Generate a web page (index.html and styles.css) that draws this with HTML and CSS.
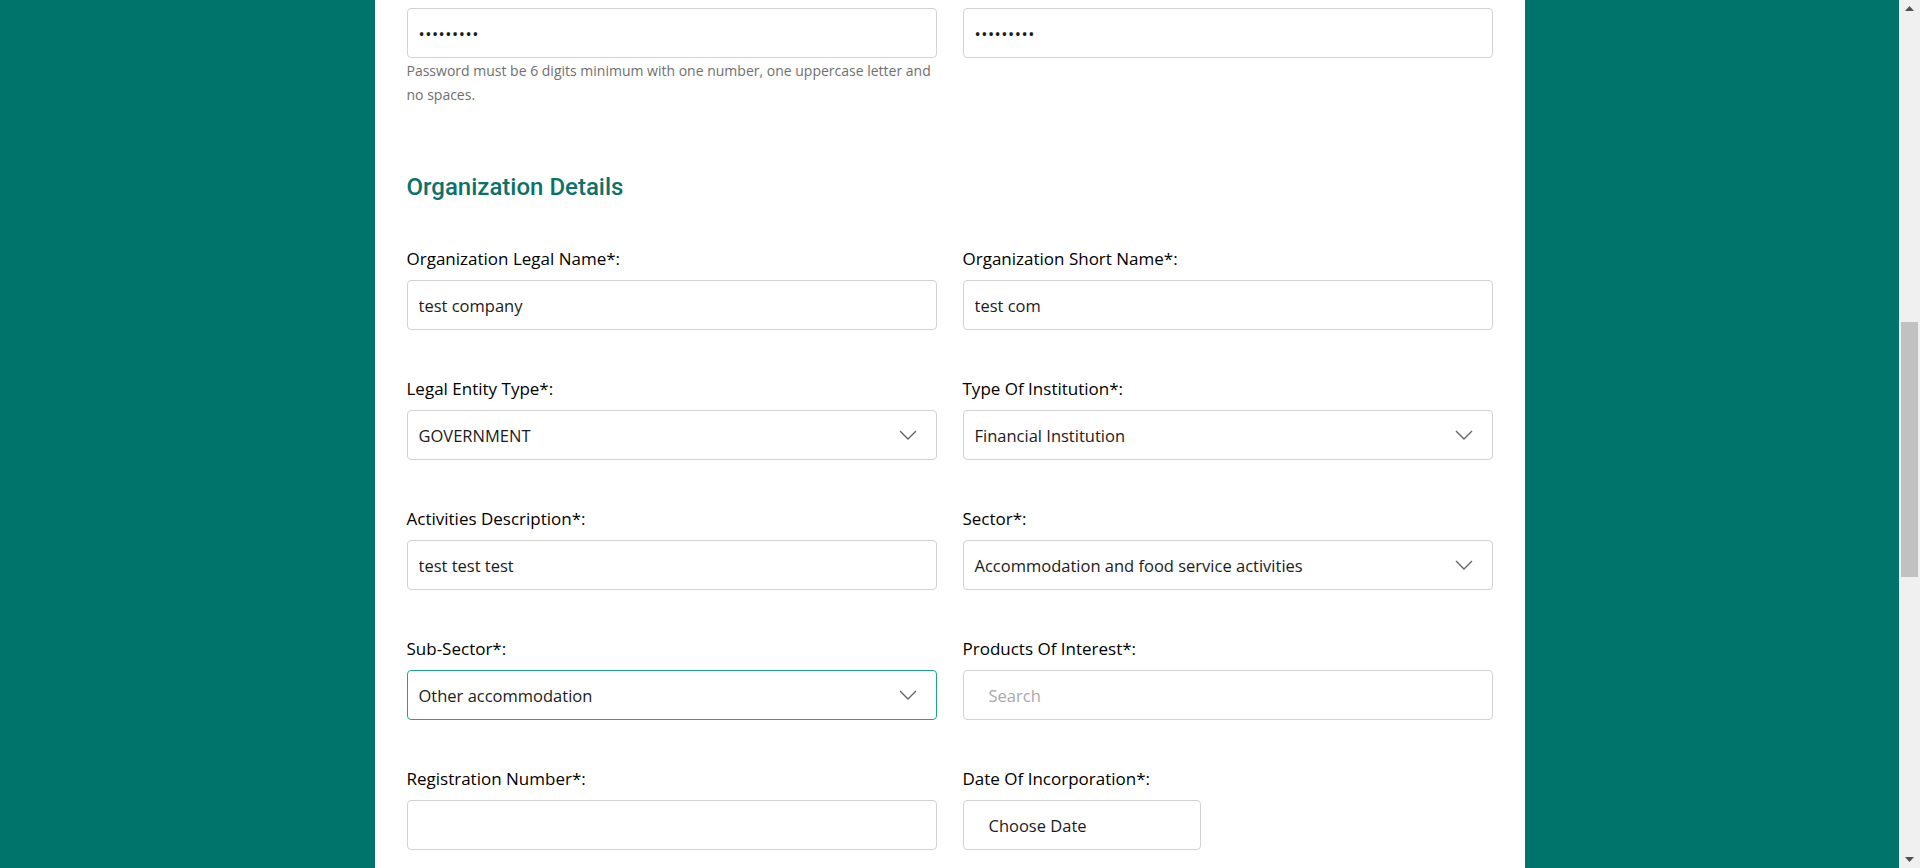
FILE: index.html
```html
<!DOCTYPE html>
<html lang="en">
<head>
<meta charset="utf-8">
<title>Registration</title>
<link rel="stylesheet" href="styles.css">
</head>
<body>
<div class="page">
  <div class="viewport">
    <main class="panel">
      <div class="form-grid">
        <div class="field field--pw">
          <input class="control control--pw" type="password" value="aaaaaaaaa">
          <p class="help">Password must be 6 digits minimum with one number, one uppercase letter and no spaces.</p>
        </div>
        <div class="field field--pw">
          <input class="control control--pw" type="password" value="aaaaaaaaa">
        </div>
      </div>

      <h2 class="section-title">Organization Details</h2>

      <div class="form-grid">
        <div class="field">
          <label class="label">Organization Legal Name*:</label>
          <input class="control" type="text" value="test company">
        </div>
        <div class="field">
          <label class="label">Organization Short Name*:</label>
          <input class="control" type="text" value="test com">
        </div>

        <div class="field">
          <label class="label">Legal Entity Type*:</label>
          <div class="control select"><span>GOVERNMENT</span><svg class="chev" width="18" height="10" viewBox="0 0 18 10"><path d="M1 1l8 8 8-8" fill="none" stroke="#666" stroke-width="1.4"/></svg></div>
        </div>
        <div class="field">
          <label class="label">Type Of Institution*:</label>
          <div class="control select"><span>Financial Institution</span><svg class="chev" width="18" height="10" viewBox="0 0 18 10"><path d="M1 1l8 8 8-8" fill="none" stroke="#666" stroke-width="1.4"/></svg></div>
        </div>

        <div class="field">
          <label class="label">Activities Description*:</label>
          <input class="control" type="text" value="test test test">
        </div>
        <div class="field">
          <label class="label">Sector*:</label>
          <div class="control select"><span>Accommodation and food service activities</span><svg class="chev" width="18" height="10" viewBox="0 0 18 10"><path d="M1 1l8 8 8-8" fill="none" stroke="#666" stroke-width="1.4"/></svg></div>
        </div>

        <div class="field">
          <label class="label">Sub-Sector*:</label>
          <div class="control select select--focus"><span>Other accommodation</span><svg class="chev" width="18" height="10" viewBox="0 0 18 10"><path d="M1 1l8 8 8-8" fill="none" stroke="#666" stroke-width="1.4"/></svg></div>
        </div>
        <div class="field">
          <label class="label">Products Of Interest*:</label>
          <input class="control control--wide-pad" type="text" placeholder="Search">
        </div>

        <div class="field">
          <label class="label">Registration Number*:</label>
          <input class="control" type="text" value="">
        </div>
        <div class="field">
          <label class="label">Date Of Incorporation*:</label>
          <div class="control control--date">Choose Date</div>
        </div>
      </div>
    </main>
  </div>
  <div class="scrollbar">
    <div class="sb-arrow"><svg width="9" height="5" viewBox="0 0 9 5"><path d="M0 5L4.5 0 9 5z" fill="#505050"/></svg></div>
    <div class="sb-track">
      <div class="sb-thumb"></div>
    </div>
    <div class="sb-arrow"><svg width="9" height="5" viewBox="0 0 9 5"><path d="M0 0L4.5 5 9 0z" fill="#505050"/></svg></div>
  </div>
</div>
</body>
</html>
```

FILE: styles.css
```css
html, body {
  margin: 0;
  padding: 0;
  height: 868px;
  overflow: hidden;
}

body {
  font-family: "Open Sans", "Noto Sans", sans-serif;
  color: #1b1b1b;
}

.page {
  display: flex;
  height: 868px;
}

.viewport {
  flex: 1;
  background: #00736a;
  display: flex;
  justify-content: center;
}

.panel {
  width: 1150px;
  box-sizing: border-box;
  background: #fff;
  padding: 8px 32px 0;
}

.form-grid {
  display: grid;
  grid-template-columns: 1fr 1fr;
  column-gap: 26px;
}

.field {
  display: flex;
  flex-direction: column;
  margin-bottom: 47px;
}

.field--pw {
  margin-bottom: 0;
}

.label {
  font-size: 17px;
  font-weight: 500;
  line-height: 24px;
  margin-bottom: 9px;
  color: #000;
}

.control {
  box-sizing: border-box;
  height: 50px;
  width: 100%;
  border: 1px solid #d2d2d2;
  border-radius: 4px;
  padding: 0 11px;
  font-family: "Open Sans", "Noto Sans", sans-serif;
  font-size: 16.5px;
  color: #1b1b1b;
  background: #fff;
  outline: none;
}

.control--pw {
  font-size: 16.5px;
  letter-spacing: 0.5px;
}

.control--wide-pad {
  padding-left: 25px;
}

.control::placeholder {
  color: #a9a9a9;
}

.select {
  display: flex;
  align-items: center;
  justify-content: space-between;
  padding: 0 19px 0 11px;
}

.select--focus {
  border-color: #1aa68e;
}

.chev {
  display: block;
}

.control--date {
  width: 238px;
  display: flex;
  align-items: center;
  padding-left: 25px;
}

.help {
  margin: 1px 0 0;
  font-size: 14px;
  line-height: 24px;
  color: #6f6f6f;
}

.section-title {
  margin: 65px 0 45px;
  font-family: "Roboto", sans-serif;
  font-size: 24px;
  line-height: 30px;
  font-weight: 500;
  color: #0c7269;
}

.scrollbar {
  width: 21px;
  background: #f0f0f0;
  display: flex;
  flex-direction: column;
}

.sb-arrow {
  height: 17px;
  display: flex;
  align-items: center;
  justify-content: center;
}

.sb-track {
  flex: 1;
  display: flex;
  flex-direction: column;
  padding-top: 305px;
}

.sb-thumb {
  height: 255px;
  margin: 0 2px;
  background: #c1c1c1;
}
```
